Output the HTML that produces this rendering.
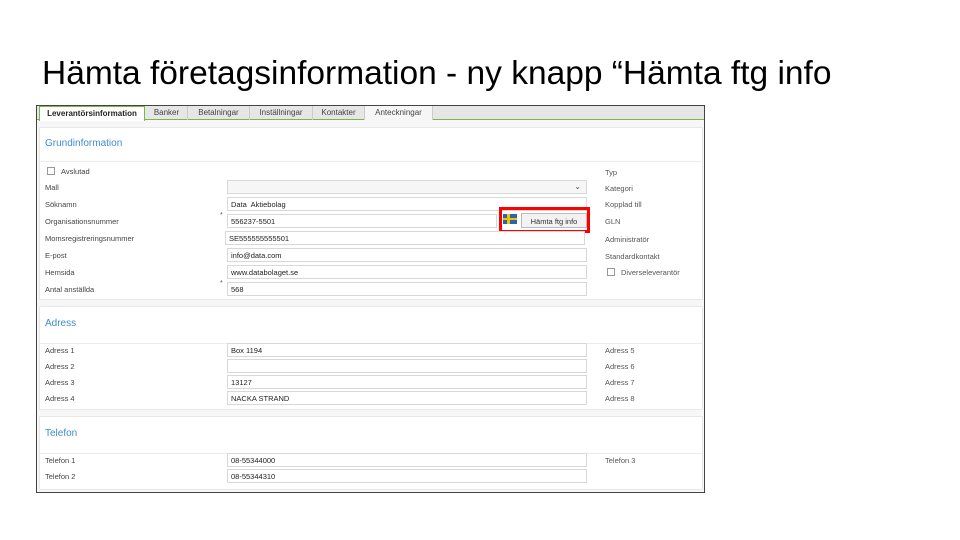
<!DOCTYPE html>
<html><head><meta charset="utf-8"><style>
*{margin:0;padding:0;box-sizing:border-box}
body{width:960px;height:540px;background:#fff;position:relative;overflow:hidden;font-family:"Liberation Sans",sans-serif}
.t{position:absolute;left:42px;top:55px;font-size:33.5px;color:#000;white-space:nowrap}
.a{position:absolute;white-space:nowrap}
.win{position:absolute;left:36px;top:105px;width:669px;height:388px;border:1px solid #444;background:#f7f7f7}
.tabs{position:absolute;left:37px;top:106px;width:667px;height:14px;background:#e6e6e6;border-bottom:1px solid #7ab648}
.tab{position:absolute;top:106px;height:14px;font-size:8px;color:#444;padding-top:2px;border-right:1px solid #ccc;text-align:center}
.panel{position:absolute;left:39px;width:664px;background:#fff;border:1px solid #e8e8e8}
.hd{position:absolute;left:0;right:0;border-bottom:1px solid #ececec}
.h{position:absolute;font-size:10px;color:#3d8ec9}
.l{position:absolute;left:45px;font-size:7.5px;color:#444}
.r{position:absolute;left:605px;font-size:7.5px;color:#555}
.f{position:absolute;left:227px;width:360px;height:14px;border:1px solid #d8d8d8;background:#fff;font-size:7.5px;color:#222;padding:2px 3px}
.cb{position:absolute;width:8px;height:8px;border:1px solid #999;background:#fff}
</style></head><body>
<div class="t">Hämta företagsinformation - ny knapp “Hämta ftg info</div>
<div class="win"></div>
<div class="tabs"></div>
<div class="tab" style="left:39px;width:106px;background:#fff;font-weight:bold;color:#222;height:15px;border:1px solid #7ab648;border-bottom:none">Leverantörsinformation</div>
<div class="tab" style="left:146px;width:42px">Banker</div>
<div class="tab" style="left:188px;width:62px">Betalningar</div>
<div class="tab" style="left:250px;width:63px">Inställningar</div>
<div class="tab" style="left:313px;width:52px">Kontakter</div>
<div class="tab" style="left:365px;width:68px;background:#f6f6f6">Anteckningar</div>

<div class="panel" style="top:127px;height:173px"><div class="hd" style="top:33px"></div></div>
<div class="h" style="left:45px;top:138px">Grundinformation</div>
<div class="cb" style="left:47px;top:167px"></div><div class="l" style="left:61px;top:167px">Avslutad</div>
<div class="l" style="top:183px">Mall</div>
<div class="l" style="top:200px">Söknamn</div>
<div class="l" style="top:217px">Organisationsnummer</div>
<div class="l" style="top:234px">Momsregistreringsnummer</div>
<div class="l" style="top:251px">E-post</div>
<div class="l" style="top:268px">Hemsida</div>
<div class="l" style="top:285px">Antal anställda</div>
<div class="a" style="left:220px;top:212px;font-size:7px;color:#555">*</div>
<div class="a" style="left:220px;top:280px;font-size:7px;color:#555">*</div>
<div class="f" style="top:180px;background:#f6f6f6"><span style="position:absolute;right:5px;top:1px;font-size:8px;color:#555">⌄</span></div>
<div class="f" style="top:197px">Data&nbsp; Aktiebolag</div>
<div class="f" style="top:214px;width:270px">556237-5501</div>
<div class="a" style="left:503px;top:214px;width:14px;height:10px;background:#2a66b0"><div style="position:absolute;left:4px;top:0;width:3px;height:10px;background:#f2c200"></div><div style="position:absolute;left:0;top:4px;width:14px;height:2px;background:#f2c200"></div></div>
<div class="a" style="left:521px;top:213px;width:66px;height:15px;border:1px solid #bbb;background:#f2f2f2;font-size:7.5px;color:#333;text-align:center;padding-top:3px">Hämta ftg info</div>
<div class="a" style="left:499px;top:207px;width:91px;height:26px;border:3px solid #f00"></div>
<div class="f" style="top:231px;left:225px">SE555555555501</div>
<div class="f" style="top:248px">info@data.com</div>
<div class="f" style="top:265px">www.databolaget.se</div>
<div class="f" style="top:282px">568</div>
<div class="r" style="top:168px">Typ</div>
<div class="r" style="top:184px">Kategori</div>
<div class="r" style="top:200px">Kopplad till</div>
<div class="r" style="top:217px">GLN</div>
<div class="r" style="top:235px">Administratör</div>
<div class="r" style="top:252px">Standardkontakt</div>
<div class="cb" style="left:607px;top:268px"></div><div class="r" style="left:621px;top:268px">Diverseleverantör</div>

<div class="panel" style="top:306px;height:104px"><div class="hd" style="top:36px"></div></div>
<div class="h" style="left:45px;top:318px">Adress</div>
<div class="l" style="top:346px">Adress 1</div><div class="f" style="top:343px">Box 1194</div><div class="r" style="top:346px">Adress 5</div>
<div class="l" style="top:362px">Adress 2</div><div class="f" style="top:359px"></div><div class="r" style="top:362px">Adress 6</div>
<div class="l" style="top:378px">Adress 3</div><div class="f" style="top:375px">13127</div><div class="r" style="top:378px">Adress 7</div>
<div class="l" style="top:394px">Adress 4</div><div class="f" style="top:391px">NACKA STRAND</div><div class="r" style="top:394px">Adress 8</div>

<div class="panel" style="top:416px;height:74px"><div class="hd" style="top:36px"></div></div>
<div class="h" style="left:45px;top:428px">Telefon</div>
<div class="l" style="top:456px">Telefon 1</div><div class="f" style="top:453px">08-55344000</div><div class="r" style="top:456px">Telefon 3</div>
<div class="l" style="top:472px">Telefon 2</div><div class="f" style="top:469px">08-55344310</div>
</body></html>
